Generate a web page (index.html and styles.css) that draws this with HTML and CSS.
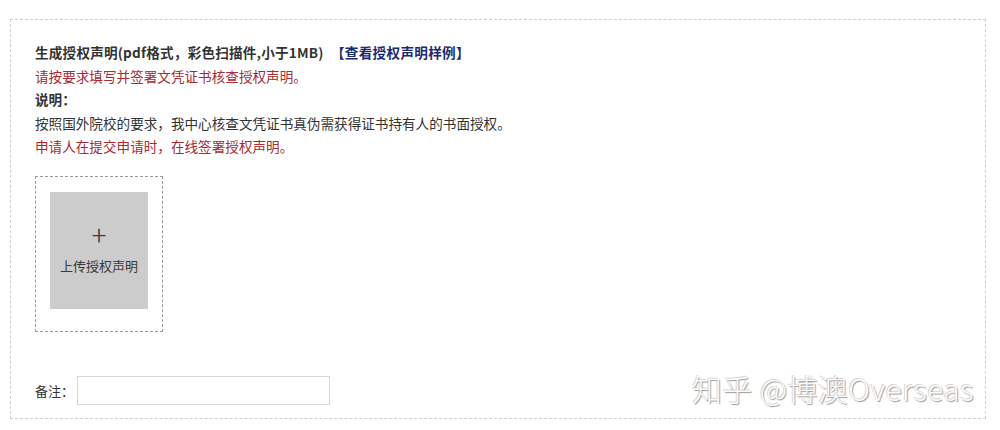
FILE: index.html
```html
<!DOCTYPE html>
<html lang="zh-CN">

<head>
    <meta charset="UTF-8">
    <title>生成授权声明</title>
    <link rel="stylesheet" href="styles.css">
</head>

<body>
    <div class="panel">
        <div class="notes">
            <p class="title">生成授权声明(pdf格式，彩色扫描件,小于1MB) <a href="#" class="sample">【查看授权声明样例】</a></p>
            <p class="warn">请按要求填写并签署文凭证书核查授权声明。</p>
            <p class="label">说明：</p>
            <p>按照国外院校的要求，我中心核查文凭证书真伪需获得证书持有人的书面授权。</p>
            <p class="warn">申请人在提交申请时，在线签署授权声明。</p>
        </div>

        <div class="upload">
            <div class="upload-btn">
                <span class="plus">+</span>
                <span>上传授权声明</span>
            </div>
        </div>

        <div class="remark">
            <label for="remark">备注：</label>
            <input type="text" id="remark">
        </div>

        <div class="watermark">知乎 @博澳Overseas</div>
    </div>
</body>

</html>
```

FILE: styles.css
```css
body {
    margin: 0;
    background: #fff;
    color: #333;
    font-family: "Noto Sans CJK SC", "Noto Sans", sans-serif;
}

.panel {
    position: relative;
    margin: 19px 14px 0 10px;
    height: 400px;
    box-sizing: border-box;
    padding: 21px 24px 0 24px;
    border: 1px dashed #cfcfcf;
}

.notes p {
    margin: 0;
    font-size: 13.6px;
    line-height: 23.5px;
}

.notes .title,
.notes .label {
    font-weight: 700;
}

.notes .title {
    letter-spacing: 0.2px;
}

.notes .sample {
    margin-left: 4px;
    color: #1c2a70;
    text-decoration: none;
    letter-spacing: 0.3px;
}

.notes .warn {
    color: #a82a33;
}

.upload {
    width: 128px;
    height: 156px;
    box-sizing: border-box;
    margin-top: 17px;
    padding: 15px 0 0 14px;
    border: 1px dashed #9a9a9a;
}

.upload-btn {
    width: 98px;
    height: 117px;
    background: #cccccc;
    display: flex;
    flex-direction: column;
    align-items: center;
    justify-content: center;
    font-size: 13px;
    color: #3a3a3a;
    cursor: pointer;
}

.upload-btn .plus {
    font-size: 28px;
    font-weight: 200;
    line-height: 28px;
    margin: -6px 0 8px;
}

.remark {
    display: flex;
    align-items: center;
    margin-top: 44px;
    font-size: 13px;
}

.remark input {
    width: 253px;
    height: 29px;
    box-sizing: border-box;
    margin: 0 0 0 3px;
    border: 1px solid #d6d6d6;
}

.watermark {
    position: absolute;
    right: 11px;
    top: 346px;
    font-size: 30px;
    font-weight: 300;
    color: #fbfbfb;
    text-shadow: 1px 1px 1px #9a9a9a, -1px -1px 0 #d8d8d8;
    letter-spacing: 0.4px;
}
```
